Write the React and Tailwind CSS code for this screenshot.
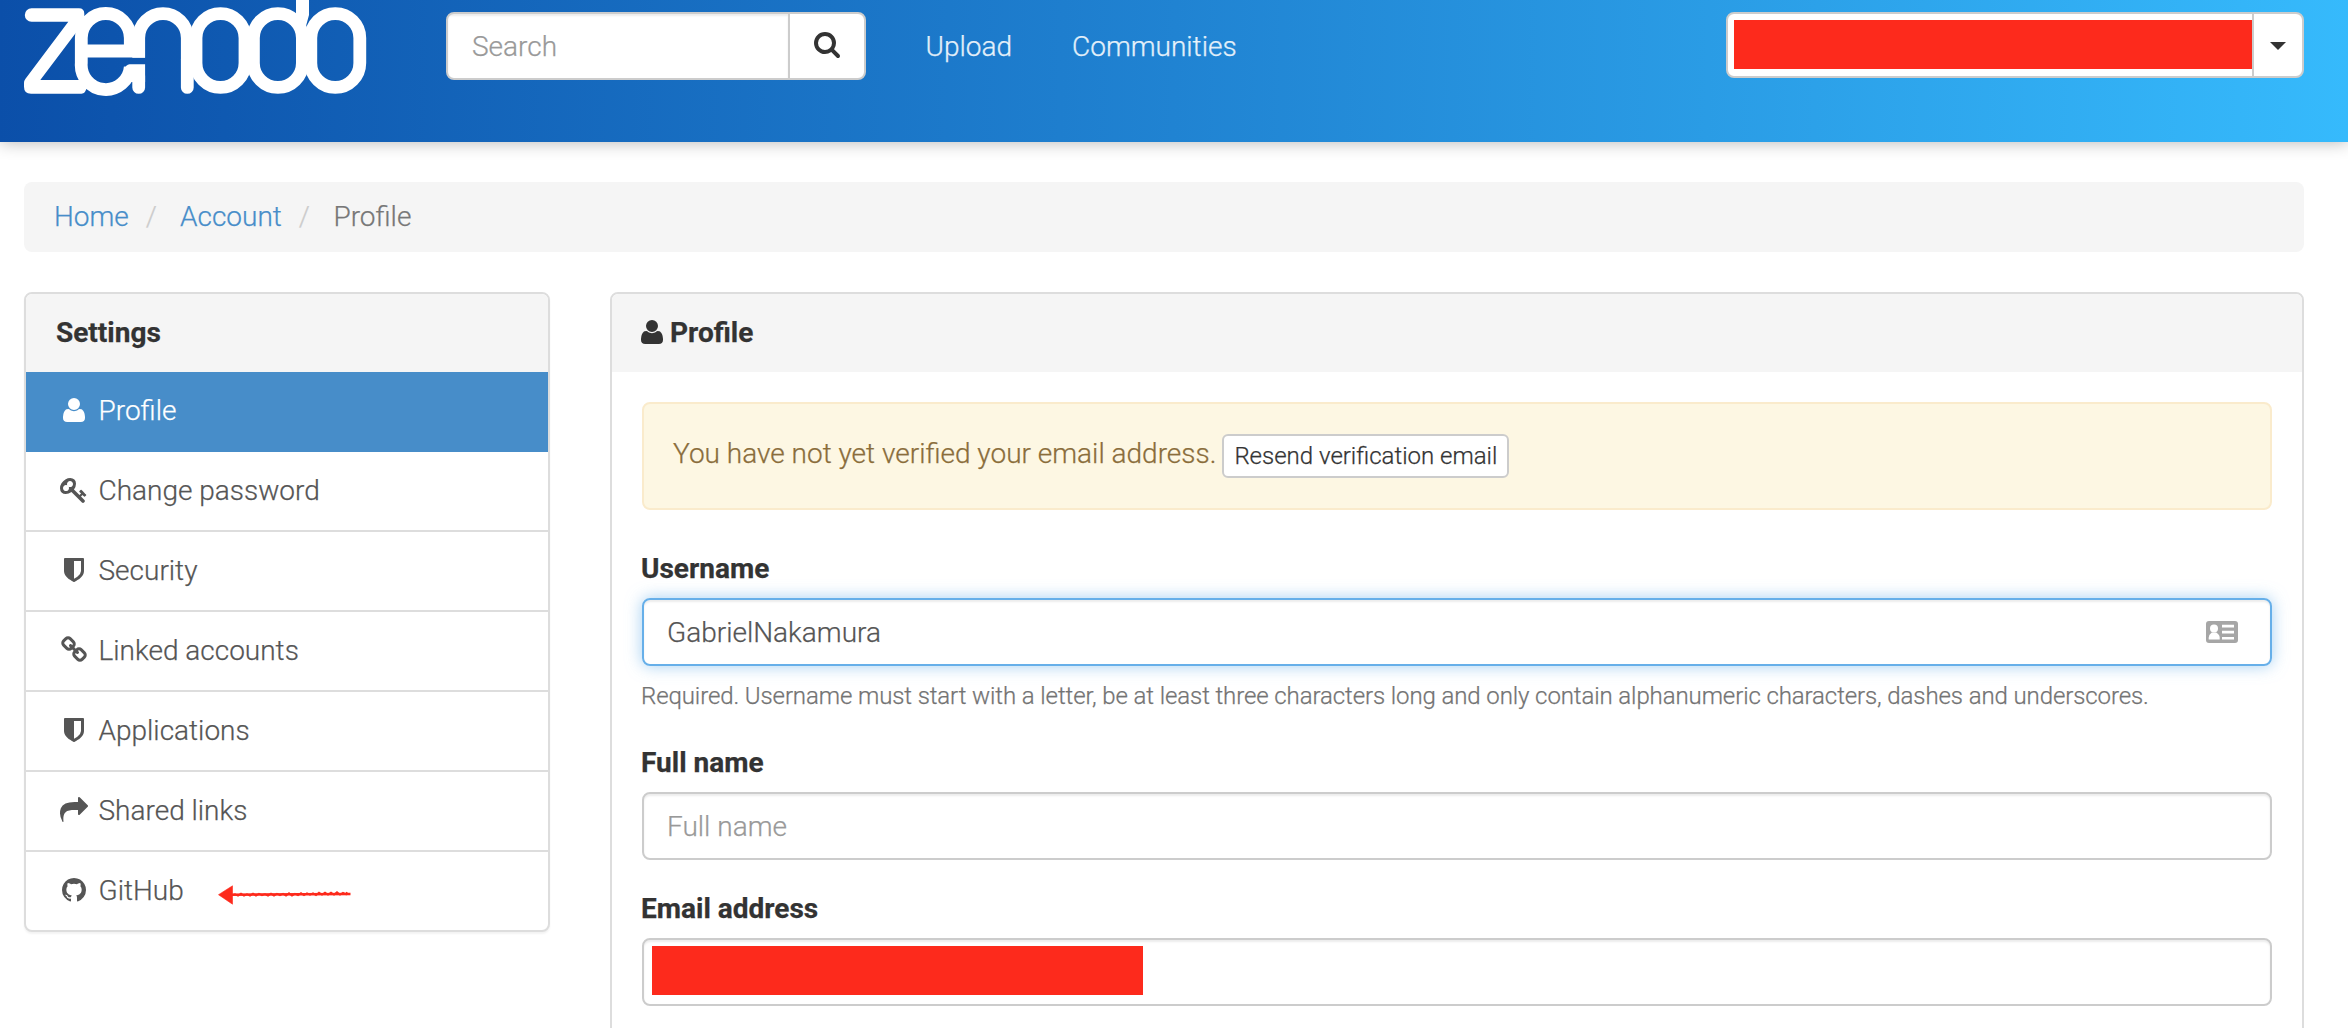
import React from "react";

const GLYPHS = {
  user: [1408, "M1408 131q0 -120 -73 -189.5t-194 -69.5h-874q-121 0 -194 69.5t-73 189.5q0 53 3.5 103.5t14 109t26.5 108.5t43 97.5t62 81t85.5 53.5t111.5 20q9 0 42 -21.5t74.5 -48t108 -48t133.5 -21.5t133.5 21.5t108 48t74.5 48t42 21.5q61 0 111.5 -20t85.5 -53.5t62 -81t43 -97.5t26.5 -108.5t14 -109t3.5 -103.5zM1088 1024q0 -159 -112.5 -271.5t-271.5 -112.5t-271.5 112.5t-112.5 271.5t112.5 271.5t271.5 112.5t271.5 -112.5t112.5 -271.5z"],
  key: [1792, "M832 1024q0 80 -56 136t-136 56t-136 -56t-56 -136q0 -42 19 -83q-41 19 -83 19q-80 0 -136 -56t-56 -136t56 -136t136 -56t136 56t56 136q0 42 -19 83q41 -19 83 -19q80 0 136 56t56 136zM1683 320q0 -17 -49 -66t-66 -49q-9 0 -28.5 16t-36.5 33t-38.5 40t-24.5 26l-96 -96l220 -220q28 -28 28 -68q0 -42 -39 -81t-81 -39q-40 0 -68 28l-671 671q-176 -131 -365 -131q-163 0 -265.5 102.5t-102.5 265.5q0 160 95 313t248 248t313 95q163 0 265.5 -102.5t102.5 -265.5q0 -189 -131 -365l355 -355l96 96q-3 3 -26 24.5t-40 38.5t-33 36.5t-16 28.5q0 17 49 66t66 49q13 0 23 -10q6 -6 46 -44.5t82 -79.5t86.5 -86t73 -78t28.5 -41z"],
  shield: [1280, "M1088 576v640h-448v-1137q119 63 213 137q235 184 235 360zM1280 1344v-768q0 -86 -33.5 -170.5t-83 -150t-118 -127.5t-126.5 -103t-121 -77.5t-89.5 -49.5t-42.5 -20q-12 -6 -26 -6t-26 6q-16 7 -42.5 20t-89.5 49.5t-121 77.5t-126.5 103t-118 127.5t-83 150t-33.5 170.5v768q0 26 19 45t45 19h1152q26 0 45 -19t19 -45z"],
  link: [1664, "M1456 320q0 40 -28 68l-208 208q-28 28 -68 28q-42 0 -72 -32q3 -3 19 -18.5t21.5 -21.5t15 -19t13 -25.5t3.5 -27.5q0 -40 -28 -68t-68 -28q-15 0 -27.5 3.5t-25.5 13t-19 15t-21.5 21.5t-18.5 19q-33 -31 -33 -73q0 -40 28 -68l206 -207q27 -27 68 -27q40 0 68 26l147 146q28 28 28 67zM753 1025q0 40 -28 68l-206 207q-28 28 -68 28q-39 0 -68 -27l-147 -146q-28 -28 -28 -67q0 -40 28 -68l208 -208q27 -27 68 -27q42 0 72 31q-3 3 -19 18.5t-21.5 21.5t-15 19t-13 25.5t-3.5 27.5q0 40 28 68t68 28q15 0 27.5 -3.5t25.5 -13t19 -15t21.5 -21.5t18.5 -19q33 31 33 73zM1648 320q0 -120 -85 -203l-147 -146q-83 -83 -203 -83q-121 0 -204 85l-206 207q-83 83 -83 203q0 123 88 209l-88 88q-86 -88 -208 -88q-120 0 -204 84l-208 208q-84 84 -84 204t85 203l147 146q83 83 203 83q121 0 204 -85l206 -207q83 -83 83 -203q0 -123 -88 -209l88 -88q86 88 208 88q120 0 204 -84l208 -208q84 -84 84 -204z"],
  share: [1792, "M1792 896q0 -26 -19 -45l-512 -512q-19 -19 -45 -19t-45 19t-19 45v256h-224q-98 0 -175.5 -6t-154 -21.5t-133 -42.5t-105.5 -69.5t-80 -101t-48.5 -138.5t-17.5 -181q0 -55 5 -123q0 -6 2.5 -23.5t2.5 -26.5q0 -15 -8.5 -25t-23.5 -10q-16 0 -28 17q-7 9 -13 22t-13.5 30t-10.5 24q-127 285 -127 451q0 199 53 333q162 403 875 403h224v256q0 26 19 45t45 19t45 -19l512 -512q19 -19 19 -45z"],
  github: [1536, "M768 1408q209 0 385.5 -103t279.5 -279.5t103 -385.5q0 -251 -146.5 -451.5t-378.5 -277.5q-27 -5 -40 7t-13 30q0 3 .5 76.5t.5 134.5q0 97 -52 142q57 6 102.5 18t94 39t81 66.5t53 105t20.5 150.5q0 119 -79 206q37 91 -8 204q-28 9 -81 -11t-92 -44l-38 -24q-93 26 -192 26t-192 -26q-16 11 -42.5 27t-83.5 38.5t-85 13.5q-45 -113 -8 -204q-79 -87 -79 -206q0 -85 20.5 -150t52.5 -105t80.5 -67t94 -39t102.5 -18q-39 -36 -49 -103q-21 -10 -45 -15t-57 -5t-65.5 21.5t-55.5 62.5q-19 32 -48.5 52t-49.5 24l-20 3q-21 0 -29 -4.5t-5 -11.5t9 -14t13 -12l7 -5q22 -10 43.5 -38t31.5 -51l10 -23q13 -38 44 -61.5t67 -30t69.5 -7t55.5 3.5l23 4q0 -38 .5 -88.5t.5 -54.5q0 -18 -13 -30t-40 -7q-232 77 -378.5 277.5t-146.5 451.5q0 209 103 385.5t279.5 279.5t385.5 103z"],
  search: [1664, "M1152 704q0 185 -131.5 316.5t-316.5 131.5t-316.5 -131.5t-131.5 -316.5t131.5 -316.5t316.5 -131.5t316.5 131.5t131.5 316.5zM1664 -128q0 -52 -38 -90t-90 -38q-54 0 -90 38l-343 342q-179 -124 -399 -124q-143 0 -273.5 55.5t-225 150t-150 225t-55.5 273.5t55.5 273.5t150 225t225 150t273.5 55.5t273.5 -55.5t225 -150t150 -225t55.5 -273.5q0 -220 -124 -399l343 -343q37 -37 37 -90z"],
};

function Icon({ name, className = "" }) {
  const [width, path] = GLYPHS[name];
  return (
    <svg
      viewBox={`0 0 ${width} 1792`}
      width={width / 64}
      height="28"
      className={`shrink-0 fill-current ${className}`}
      aria-hidden="true"
    >
      <path d={path} transform="translate(0 1536) scale(1 -1)" />
    </svg>
  );
}

function Logo() {
  return (
    <svg viewBox="24 0 344 96" width="344" height="96" className="shrink-0" role="img" aria-label="zenodo">
      <path
        fill="#fff"
        d="M31.5 8.3H79q5.3 0 5.3 5.5V22L75 34L40.3 80H84q2.5 0 2.5 3v5q-1 5.7-5 5.7H31q-7 0-7-7v-4q0-2 1.5-4L68.3 21.7H31.5a6.7 6.7 0 0 1 0-13.4z"
      />
      <g fill="none" stroke="#fff" strokeWidth="12.8">
        <path d="M145 51H81.3M130.3 51V38A24.45 24.45 0 0 0 81.3 38V63A24.45 24.45 0 0 0 130.3 67" />
        <path d="M138.7 57.7V38A24.3 24.3 0 0 1 187.3 38V60" />
        <path strokeLinecap="round" d="M138.7 76V87.4M187.3 60V87.4" />
        <rect x="196" y="13.7" width="49" height="73.6" rx="24.4" />
        <rect x="253.4" y="13.7" width="49" height="73.6" rx="24.4" />
        <rect x="310.8" y="13.7" width="49" height="73.6" rx="24.4" />
      </g>
      <path fill="#fff" d="M296 0H309V15L306 26V40H296zM145.1 64.3H129.5Q126 64.5 124 69.5L130 82L145.1 82z" />
    </svg>
  );
}

const MENU = [
  ["user", "Profile"],
  ["key", "Change password"],
  ["shield", "Security"],
  ["link", "Linked accounts"],
  ["shield", "Applications"],
  ["share", "Shared links"],
  ["github", "GitHub"],
];

function Arrow() {
  return (
    <svg viewBox="0 0 134 20" width="134" height="20" className="ml-[34px] mt-2 shrink-0" aria-hidden="true">
      <path d="M.5 9.7L14.5.8V19.2z" fill="#fd2a1c" stroke="#fd2a1c" strokeWidth=".6" strokeLinejoin="round" />
      <path d="M13 9.7L132.5 9" stroke="#fd2a1c" strokeWidth="2.4" />
      <path
        d="M14 10.2l3-1 3 1.5 3-2 3 2 3-1.5 3 1.5 3-2 3 2 3-2 3 1.5 3-1 3 1.5 3-2 3 2 3-2 3 1.5 3-1.5 3 2 3-2.5 3 2.5 3-2 3 1.5 3-2 3 2 3-2 3 1.5 3-1.5 3 2 3-2.5 3 2 3-2 3 2 3-2 3 2 3-2.5 3 2.5 3-2 3 1.5 1-2"
        fill="none"
        stroke="#fd2a1c"
        strokeWidth="1.8"
      />
    </svg>
  );
}

function Sidebar() {
  return (
    <nav className="w-[526px] shrink-0 self-start overflow-hidden rounded-lg border-2 border-[#ddd] bg-white shadow-[0_2px_2px_rgba(0,0,0,0.05)]">
      <div className="flex h-[78px] items-center bg-[#f5f5f5] pl-[30px] font-bold text-[#333]">Settings</div>
      {MENU.map(([icon, label], i) => (
        <a
          key={label}
          className={
            i === 0
              ? "flex h-20 items-center bg-[#478dc9] pb-0.5 pl-[30px] text-white"
              : i === MENU.length - 1
                ? "flex h-[78px] items-center pl-[30px] text-[#555]"
                : "flex h-20 items-center border-b-2 border-[#ddd] pl-[30px] text-[#555]"
          }
        >
          <span className="flex w-9 justify-center">
            <Icon name={icon} className="-mt-0.5" />
          </span>
          <span className="ml-[6.5px]">{label}</span>
          {label === "GitHub" && <Arrow />}
        </a>
      ))}
    </nav>
  );
}

function ContactCard() {
  return (
    <svg viewBox="0 0 32 22" width="32" height="22" className="-mt-px mr-8" aria-hidden="true">
      <rect width="32" height="22" rx="3" fill="#a6a6a6" />
      <circle cx="8" cy="7.6" r="4" fill="#fff" />
      <path d="M2.7 18.5v-1.8q0-3 3-5.2h4.6q3.4 2.2 3.4 5.2v1.8z" fill="#fff" />
      <path d="M16 5.1h12M16 11.1h12M16 17.3h12" stroke="#fff" strokeWidth="2.6" />
    </svg>
  );
}

export default function App() {
  return (
    <div className="h-[1028px] w-[2348px] overflow-hidden bg-white font-['Roboto','Liberation_Sans',sans-serif] text-[28px] font-light leading-10 text-[#333] [-webkit-text-stroke:0.25px]">
      <header className="flex h-[142px] items-start bg-[linear-gradient(91deg,#0b4fa9,#2083d2_50%,#36bafc)] pl-6 pr-11 shadow-[0_0_16px_rgba(0,0,0,0.3)]">
        <Logo />
        <div className="ml-[78px] mt-3 flex h-[68px] w-[420px] overflow-hidden rounded-lg border-2 border-[#ccc] bg-white">
          <div className="flex w-[340px] items-center pl-6 pt-0.5 text-[#999] shadow-[inset_0_2px_2px_rgba(0,0,0,0.075)]">
            Search
          </div>
          <button className="flex flex-1 items-center justify-center border-l-2 border-[#ccc]">
            <Icon name="search" className="-mt-1" />
          </button>
        </div>
        <a className="ml-[59.5px] mt-[27px] text-white/85">Upload</a>
        <a className="ml-[60px] mt-[27px] text-white/85">Communities</a>
        <div className="ml-auto mt-3 flex h-[66px] w-[578px] items-center overflow-hidden rounded-lg border-2 border-[#ccc] bg-white">
          <div className="-mt-px ml-[5.5px] h-[49.5px] flex-1 bg-[#fd2a1c]" />
          <button className="flex h-full w-[50px] items-center justify-center border-l-2 border-[#ccc]">
            <span className="mt-0.5 border-x-8 border-t-8 border-x-transparent border-t-[#333]" />
          </button>
        </div>
      </header>

      <div className="mx-6 mr-11 mt-10 flex h-[70px] items-center rounded-lg bg-[#f5f5f5] pl-[30px]">
        <a className="text-[#478dc9]">Home</a>
        <span className="ml-[17px] text-[#ccc]">/</span>
        <a className="ml-[23px] text-[#478dc9]">Account</a>
        <span className="ml-[17px] text-[#ccc]">/</span>
        <span className="ml-[23.5px] text-[#777]">Profile</span>
      </div>

      <main className="mx-6 mr-11 mt-10 flex gap-[60px]">
        <Sidebar />
        <section className="h-[800px] flex-1 overflow-hidden rounded-lg border-2 border-[#ddd]">
          <div className="flex h-[78px] items-center bg-[#f5f5f5] pl-[29px] font-bold">
            <Icon name="user" className="-mt-0.5" />
            <span className="ml-[7px]">Profile</span>
          </div>
          <div className="px-[30px] pt-[30px]">
            <div className="flex h-[108px] items-start rounded-lg border-2 border-[#faebcc] bg-[#fdf7e3] pl-[29px] pt-[30px] text-[#8a6d3b]">
              <span>You have not yet verified your email address.</span>
              <button className="ml-1.5 h-11 rounded-md border-2 border-[#ccc] bg-white px-2.5 text-[24px] leading-10 text-[#333]">
                Resend verification email
              </button>
            </div>

            <div className="-ml-px mt-[39px] font-bold">Username</div>
            <div className="mt-[9px] flex h-[68px] items-center justify-between rounded-lg border-2 border-[#66afe9] pl-[23px] pt-px text-[#555] shadow-[inset_0_2px_2px_rgba(0,0,0,0.075),0_0_16px_rgba(102,175,233,0.6)]">
              <span>GabrielNakamura</span>
              <ContactCard />
            </div>
            <p className="-ml-px mt-2.5 whitespace-nowrap text-[24px] tracking-[-0.1px] text-[#737373]">
              Required. Username must start with a letter, be at least three characters long and only contain
              alphanumeric characters, dashes and underscores.
            </p>

            <div className="-ml-px mt-[27px] font-bold">Full name</div>
            <div className="mt-[9px] flex h-[68px] items-center rounded-lg border-2 border-[#ccc] pl-[23px] pt-px text-[#999] shadow-[inset_0_2px_2px_rgba(0,0,0,0.075)]">
              Full name
            </div>

            <div className="-ml-px mt-[29px] font-bold">Email address</div>
            <div className="mt-[9px] flex h-[68px] items-center rounded-lg border-2 border-[#ccc] pl-[7.5px] shadow-[inset_0_2px_2px_rgba(0,0,0,0.075)]">
              <div className="-mt-[3px] h-[49.5px] w-[491px] bg-[#fd2a1c]" />
            </div>
          </div>
        </section>
      </main>
    </div>
  );
}
